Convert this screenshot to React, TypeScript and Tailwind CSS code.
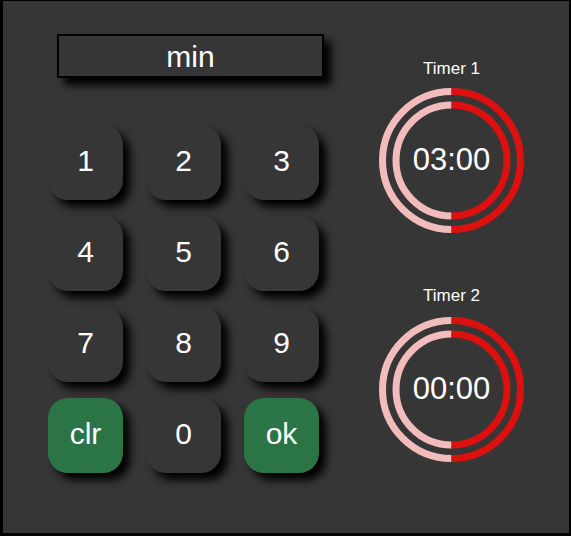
const KEYS = [
  { label: '1' },
  { label: '2' },
  { label: '3' },
  { label: '4' },
  { label: '5' },
  { label: '6' },
  { label: '7' },
  { label: '8' },
  { label: '9' },
  { label: 'clr', green: true },
  { label: '0' },
  { label: 'ok', green: true },
]

function Ring({ time }: { time: string }) {
  return (
    <div className="relative w-[145px] h-[145px]">
      <svg width="145" height="145" viewBox="0 0 145 145" className="absolute inset-0">
        {/* outer ring */}
        <path d="M 72.5 141.5 A 69 69 0 0 1 72.5 3.5" fill="none" stroke="#f3bcbc" strokeWidth="7" />
        <path d="M 72.5 3.5 A 69 69 0 0 1 72.5 141.5" fill="none" stroke="#dd1010" strokeWidth="7" />
        {/* inner ring */}
        <path d="M 72.5 128 A 55.5 55.5 0 0 1 72.5 17" fill="none" stroke="#f3bcbc" strokeWidth="7" />
        <path d="M 72.5 17 A 55.5 55.5 0 0 1 72.5 128" fill="none" stroke="#dd1010" strokeWidth="7" />
      </svg>
      <div className="absolute inset-0 flex items-center justify-center text-[31px] text-white">{time}</div>
    </div>
  )
}

export default function App() {
  return (
    <div
      className="w-[571px] h-[536px] bg-[#363636] border-black border-l-[3px] border-t border-r-2 border-b-[3px] flex text-white"
      style={{ fontFamily: '"Liberation Sans", Arial, sans-serif' }}
    >
      {/* Keypad */}
      <div className="w-[376px] pl-[45px] pt-[33px]">
        <div className="ml-[9px] w-[267px] h-[44px] border-2 border-black flex items-center justify-center text-[30px] shadow-[7px_7px_8px_#000]">
          min
        </div>
        <div className="mt-[47px] grid grid-cols-[75px_75px_75px] gap-x-[23px] gap-y-[16px]">
          {KEYS.map((k) => (
            <div
              key={k.label}
              className={`w-[75px] h-[75px] rounded-[20px] flex items-center justify-center text-[30px] pb-[4px] shadow-[7px_7px_8px_#000] ${
                k.green ? 'bg-[#2a7445]' : 'bg-[#363636]'
              }`}
            >
              {k.label}
            </div>
          ))}
        </div>
      </div>

      {/* Timers */}
      <div className="w-[145px] flex flex-col items-center pt-[58px]">
        <div className="text-[17px] leading-[20px]">Timer 1</div>
        <div className="mt-[9px]">
          <Ring time="03:00" />
        </div>
        <div className="mt-[53px] text-[17px] leading-[20px]">Timer 2</div>
        <div className="mt-[11px]">
          <Ring time="00:00" />
        </div>
      </div>
    </div>
  )
}
